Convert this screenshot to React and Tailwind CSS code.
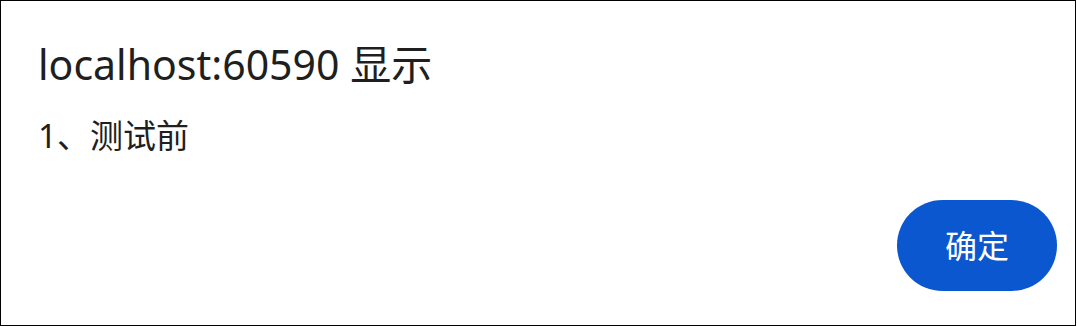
const App = () => {
  return (
    <div className="w-[1076px] h-[326px] border border-black bg-white flex flex-col font-['Noto_Sans','Noto_Sans_CJK_SC',sans-serif] text-[#1f1f1f]">
      <div className="px-[37px] pt-[37px]">
        <h1 className="text-[41px] leading-[52px]">localhost:60590 显示</h1>
        <p className="mt-[26px] text-[33px] leading-[40px]">1、测试前</p>
      </div>
      <div className="mt-auto flex justify-end pr-[18px] pb-[34px]">
        <button className="w-[160px] h-[91px] rounded-full bg-[#0b57d0] text-white text-[32px]">
          确定
        </button>
      </div>
    </div>
  );
};

export default App;
